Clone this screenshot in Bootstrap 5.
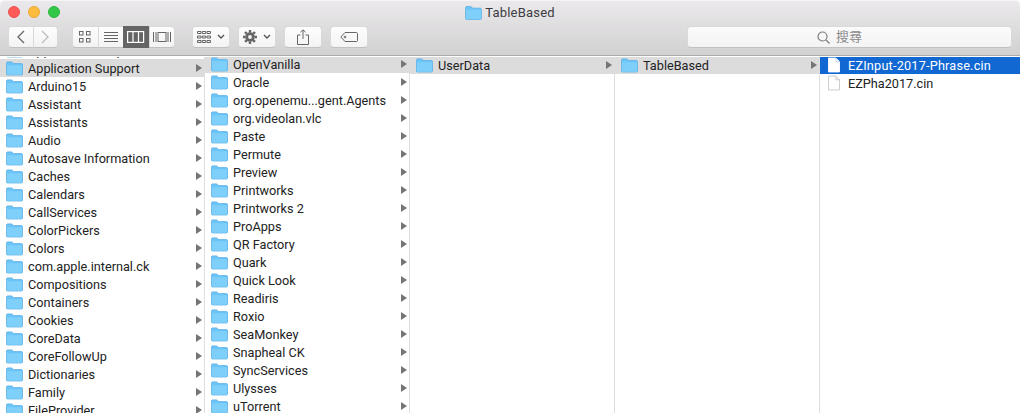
<!DOCTYPE html>
<html lang="en">
<head>
  <meta charset="UTF-8">
  <title>TableBased</title>
  <link href="https://cdn.jsdelivr.net/npm/bootstrap@5.3.3/dist/css/bootstrap.min.css" rel="stylesheet">
  <style>
    html, body { height: 100%; overflow: hidden; background: #fff; }
    body { font-family: Roboto, "Noto Sans CJK TC", sans-serif; font-size: 12.7px; color: #222; }
    .finder-head { height: 56px; background: linear-gradient(#ebe9eb, #d2d1d2); border-bottom: 1px solid #ababab; border-radius: 5px 5px 0 0; box-shadow: inset 0 1px 0 #f6f5f6; }
    .title-row { height: 25px; padding-top: 1px; color: #3c3c42; font-size: 13px; letter-spacing: .2px; }
    .title-row svg { width: 17px; height: 14px; margin-right: 3px; }
    .light { width: 12px; height: 12px; border-radius: 50%; }
    .light-red { background: #fc5b57; border: 1px solid #ec5350; }
    .light-yellow { background: #fdbc40; border: 1px solid #ecaa30; }
    .light-green { background: #33c748; border: 1px solid #2bb83c; }
    .lights { left: 8px; top: 6px; gap: 8px; }
    .tool-row { padding: 1px 8px 0; }
    .tool-btn { height: 22px; padding: 0; border-radius: 4px; border: 1px solid #dad9da; border-bottom-color: #c2c1c2; background: linear-gradient(#fdfdfd, #f3f3f3); display: flex; align-items: center; justify-content: center; }
    .tool-btn:hover { background: #fff; border-color: #d3d2d3; }
    .tool-btn svg { display: block; }
    .w-nav { width: 25.5px; }
    .w-view { width: 26.5px; }
    .w-tool { width: 38px; }
    .gap-nav { margin-left: 14px; }
    .gap-view { margin-left: 17px; }
    .gap-arrange { gap: 6px; }
    .tool-btn.view-on, .tool-btn.view-on:hover { background: #656565; border-color: #656565; }
    .search-box { width: 325px; height: 22px; padding-right: 20px; border-radius: 4px; border: 1px solid #dad9da; border-bottom-color: #c2c1c2; background: linear-gradient(#fbfbfb, #f3f3f3); color: #8b8b8b; font-size: 13px; gap: 6px; }
    .browser { height: 357px; padding-top: 1px; overflow: hidden; }
    .pane { width: 205px; flex: none; border-right: 1px solid #dedede; overflow: hidden; }
    .pane:last-child { border-right: 0; flex: 1 1 auto; }
    .pane-row { height: 18px; padding: 0 2px 0 6px; white-space: nowrap; background: transparent; border: 0; border-radius: 0; color: #222; }
    .pane-row span { padding-top: 2px; }
    .pane-row svg.folder { width: 17px; height: 15px; flex: none; margin-right: 5px; }
    .pane-row svg.doc { width: 12px; height: 16px; flex: none; margin: 0 8px 0 2px; }
    .pane-row .arrow { margin-left: auto; width: 0; height: 0; border-left: 6px solid #757575; border-top: 4px solid transparent; border-bottom: 4px solid transparent; }
    .row-open { background: #dcdcdc; }
    .pane-row.row-sel { background: #1268d3; color: #fff; letter-spacing: .2px; }
    .shift-col1 { margin-top: -16px; }
    .shift-col2 { margin-top: -2px; }
    .shift-col3 { margin-top: -1px; }
  </style>
</head>
<body>

  <svg width="0" height="0" class="position-absolute">
    <symbol id="folder" viewBox="0 0 18 15">
      <path d="M.5 3V1.6C.5 1 1 .5 1.6.5h4.300c.5 0 .8.2 1.100.6L8 2.300h8.400c.6 0 1.100.5 1.100 1.100v9.900c0 .6-.5 1.100-1.100 1.100H1.600C1 14.400.5 13.900.5 13.300z" fill="#6cc4f7" stroke="#58aee6" stroke-width=".8"/>
      <path d="M1 4h16v9.200c0 .5-.3.800-.8.800H1.800c-.5 0-.8-.3-.8-.8z" fill="#7ed0fb"/>
    </symbol>
  </svg>

  <header class="finder-head position-relative">
    <div class="lights position-absolute d-flex">
      <span class="light light-red"></span>
      <span class="light light-yellow"></span>
      <span class="light light-green"></span>
    </div>
    <div class="title-row d-flex justify-content-center align-items-center">
      <svg><use href="#folder"/></svg>TableBased
    </div>
    <div class="tool-row d-flex align-items-center">
      <div class="btn-group">
        <button class="btn tool-btn w-nav"><svg width="10" height="14" fill="none" stroke="#666" stroke-width="1.300"><path d="M8 1 2 7l6 6"/></svg></button>
        <button class="btn tool-btn w-nav"><svg width="10" height="14" fill="none" stroke="#bdbdbd" stroke-width="1.300"><path d="m2 1 6 6-6 6"/></svg></button>
      </div>
      <div class="btn-group gap-nav">
        <button class="btn tool-btn w-view"><svg width="12" height="12" fill="none" stroke="#666"><rect x=".5" y=".5" width="3.500" height="3.500"/><rect x="7.500" y=".5" width="3.500" height="3.500"/><rect x=".5" y="7.500" width="3.500" height="3.500"/><rect x="7.500" y="7.500" width="3.500" height="3.500"/></svg></button>
        <button class="btn tool-btn w-view"><svg width="16" height="12" stroke="#666"><path d="M1 1.500h14M1 4.500h14M1 7.500h14M1 10.500h14"/></svg></button>
        <button class="btn tool-btn w-view view-on"><svg width="18" height="12" fill="none" stroke="#fff" stroke-width="1.200"><rect x=".6" y=".6" width="16" height="10.800"/><path d="M6 .5v11M11.500 .5v11"/></svg></button>
        <button class="btn tool-btn w-view"><svg width="18" height="12" fill="none" stroke="#666"><rect x="5" y="1.500" width="8" height="9"/><path d="M.5 1v10M3 1v10M15 1v10M17.500 1v10"/></svg></button>
      </div>
      <button class="btn tool-btn w-tool gap-view gap-arrange"><svg width="14" height="12" fill="none" stroke="#666"><path d="M.5 .5h3.500v2H.5zM5.200 .5h3.500v2H5.200zM10 .5h3.500v2H10zM.5 5h3.500v2H.5zM5.200 5h3.500v2H5.200zM10 5h3.500v2H10zM.5 9.500h3.500v2H.5zM5.200 9.500h3.500v2H5.200zM10 9.500h3.500v2H10z"/></svg><svg width="8" height="6" fill="none" stroke="#555" stroke-width="1.400"><path d="m1 1 3 3 3-3"/></svg></button>
      <button class="btn tool-btn w-tool ms-2 gap-arrange"><svg width="14" height="14"><circle cx="7" cy="7" r="4.800" fill="#666"/><circle cx="7" cy="7" r="1.900" fill="#f5f5f5"/><path d="M7 0v14M0 7h14M2 2l10 10M12 2 2 12" stroke="#666" stroke-width="2.400" stroke-dasharray="2.400 9.200"/></svg><svg width="8" height="6" fill="none" stroke="#555" stroke-width="1.400"><path d="m1 1 3 3 3-3"/></svg></button>
      <button class="btn tool-btn w-tool ms-2"><svg width="12" height="16" fill="none" stroke="#666"><path d="M3.500 6H.5v9.500h11V6h-3M6 10V1M3.500 3.200 6 .8l2.500 2.400"/></svg></button>
      <button class="btn tool-btn w-tool ms-2"><svg width="18" height="10" fill="none" stroke="#666"><path d="M5 .5h11.500c.5 0 1 .5 1 1v7c0 .5-.5 1-1 1H5L.8 5z"/><circle cx="5" cy="5" r=".9"/></svg></button>
      <div class="search-box ms-auto d-flex justify-content-center align-items-center">
        <svg width="13" height="13" fill="none" stroke="#7d7d7d" stroke-width="1.200"><circle cx="5.500" cy="5.500" r="4.500"/><path d="m9 9 3.500 3.500"/></svg>搜尋
      </div>
    </div>
  </header>

  <main class="browser d-flex" id="browser"></main>

  <script>
    const panes = [
      { cls: 'shift-col1', open: 'Application Support', items: ['Application Scripts', 'Application Support', 'Arduino15', 'Assistant', 'Assistants', 'Audio', 'Autosave Information', 'Caches', 'Calendars', 'CallServices', 'ColorPickers', 'Colors', 'com.apple.internal.ck', 'Compositions', 'Containers', 'Cookies', 'CoreData', 'CoreFollowUp', 'Dictionaries', 'Family', 'FileProvider'] },
      { cls: 'shift-col2', open: 'OpenVanilla', items: ['OpenVanilla', 'Oracle', 'org.openemu...gent.Agents', 'org.videolan.vlc', 'Paste', 'Permute', 'Preview', 'Printworks', 'Printworks 2', 'ProApps', 'QR Factory', 'Quark', 'Quick Look', 'Readiris', 'Roxio', 'SeaMonkey', 'Snapheal CK', 'SyncServices', 'Ulysses', 'uTorrent'] },
      { cls: 'shift-col3', open: 'UserData', items: ['UserData'] },
      { cls: 'shift-col3', open: 'TableBased', items: ['TableBased'] }
    ];
    const browser = document.getElementById('browser');

    panes.forEach(p => {
      let html = '<div class="pane"><div class="list-group list-group-flush ' + p.cls + '">';
      p.items.forEach(name => {
        html += '<div class="list-group-item pane-row d-flex align-items-center ' + (name === p.open ? 'row-open' : '') + '">' +
          '<svg class="folder"><use href="#folder"/></svg><span>' + name + '</span><i class="arrow"></i></div>';
      });
      browser.insertAdjacentHTML('beforeend', html + '</div></div>');
    });

    const doc = (fill, line) => '<svg class="doc" viewBox="0 0 13 16"><path d="M.5.5h8l4 4v11H.5z" fill="' + fill + '" stroke="' + line + '"/><path d="M8.500.5v4h4" fill="none" stroke="' + (line === '#fff' ? '#b8d2f2' : line) + '"/></svg>';
    browser.insertAdjacentHTML('beforeend',
      '<div class="pane"><div class="list-group list-group-flush shift-col3">' +
      '<div class="list-group-item pane-row row-sel d-flex align-items-center">' + doc('#fff', '#fff') + '<span>EZInput-2017-Phrase.cin</span></div>' +
      '<div class="list-group-item pane-row d-flex align-items-center">' + doc('#fff', '#c9c9c9') + '<span>EZPha2017.cin</span></div>' +
      '</div></div>');
  </script>
  <script src="https://cdn.jsdelivr.net/npm/bootstrap@5.3.3/dist/js/bootstrap.bundle.min.js"></script>
</body>
</html>
